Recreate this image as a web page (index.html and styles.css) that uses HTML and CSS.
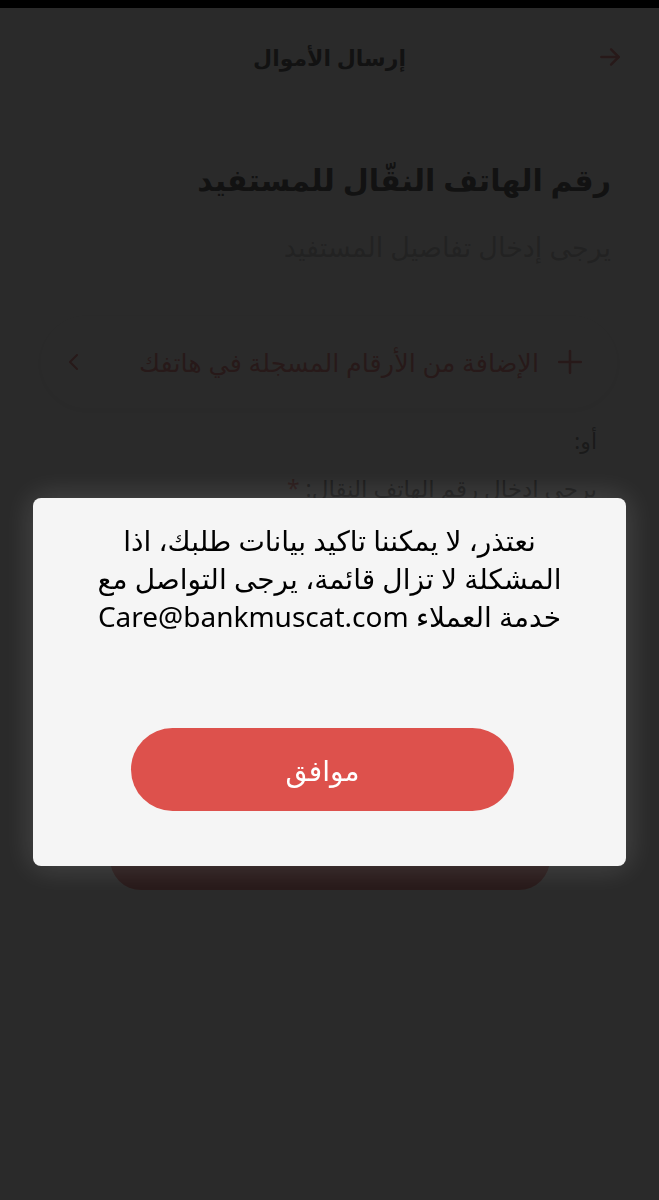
FILE: index.html
```html
<!DOCTYPE html>
<html lang="ar" dir="rtl">
<head>
    <meta charset="UTF-8">
    <meta name="viewport" content="width=device-width, initial-scale=1.0">
    <title>إرسال الأموال</title>
    <link rel="stylesheet" href="styles.css">
</head>
<body>
    <div class="statusbar"></div>
    <header class="topbar">
        <span class="back">
            <svg width="26" height="26" viewBox="0 0 24 24" fill="none" stroke="currentColor" stroke-width="2.4" stroke-linecap="round" stroke-linejoin="round"><path d="M4 12h16"/><path d="M13 5l7 7-7 7"/></svg>
        </span>
        <h2 class="pagetitle">إرسال الأموال</h2>
        <span class="spacer"></span>
    </header>

    <main class="content">
        <h1 class="heading">رقم الهاتف النقّال للمستفيد</h1>
        <p class="subheading">يرجى إدخال تفاصيل المستفيد</p>

        <div class="contactcard">
            <span class="plus">
                <svg width="26" height="26" viewBox="0 0 24 24" fill="none" stroke="currentColor" stroke-width="2.4" stroke-linecap="round"><path d="M12 2v20"/><path d="M2 12h20"/></svg>
            </span>
            <span class="contacttext">الإضافة من الأرقام المسجلة في هاتفك</span>
            <span class="chevron">
                <svg width="18" height="22" viewBox="0 0 18 22" fill="none" stroke="currentColor" stroke-width="2.2" stroke-linecap="round" stroke-linejoin="round"><path d="M12 4l-7 7 7 7"/></svg>
            </span>
        </div>

        <p class="or">أو:</p>
        <label class="fieldlabel">يرجى ادخال رقم الهاتف النقال: <span class="req">*</span></label>
        <div class="phoneinput"></div>

        <button class="continue"></button>
    </main>

    <!-- error popup over the page -->
    <div class="overlay">
        <div class="dialog">
            <p class="message">نعتذر، لا يمكننا تاكيد بيانات طلبك، اذا<br>المشكلة لا تزال قائمة، يرجى التواصل مع<br>خدمة العملاء Care@bankmuscat.com</p>
            <button class="okbtn">موافق</button>
        </div>
    </div>
</body>
</html>
```

FILE: styles.css
```css
* {
    margin: 0;
    padding: 0;
    box-sizing: border-box;
}
body {
    font-family: "Noto Sans", "DejaVu Sans", sans-serif;
    background-color: #fff;
    color: #000;
    width: 659px;
    height: 1200px;
    overflow: hidden;
}
.statusbar {
    height: 8px;
    background-color: #000;
    position: relative;
    z-index: 2;
}
.topbar {
    height: 98px;
    display: flex;
    align-items: center;
    justify-content: space-between;
    padding: 0 36px 0 36px;
}
.back {
    color: #dd514c;
    display: flex;
    width: 26px;
}
.spacer {
    width: 26px;
}
.pagetitle {
    font-size: 22px;
    font-weight: 600;
    color: #000;
}
.content {
    padding: 0 48px;
}
.heading {
    margin-top: 54px;
    font-size: 30px;
    font-weight: 600;
    line-height: 40px;
}
.subheading {
    margin-top: 30px;
    font-size: 27px;
    line-height: 34px;
    color: #aaa;
}
.contactcard {
    margin: 52px -6px 0 -7px;
    height: 92px;
    border-radius: 46px;
    background-color: #fff;
    box-shadow: 0 2px 14px rgba(0, 0, 0, 0.12);
    display: flex;
    align-items: center;
    padding: 0 34px 0 24px;
    color: #dd514c;
}
.plus {
    display: flex;
}
.contacttext {
    margin-right: 18px;
    font-size: 25.5px;
    flex: 1;
}
.chevron {
    display: flex;
}
.or {
    margin-top: 18px;
    margin-right: 14px;
    font-size: 22px;
    line-height: 28px;
    color: #555;
}
.fieldlabel {
    display: block;
    margin-top: 20px;
    margin-right: 14px;
    font-size: 23px;
    line-height: 28px;
    color: #555;
}
.req {
    color: #dd514c;
}
.phoneinput {
    margin-top: 20px;
    height: 48px;
    border-bottom: 1px solid #ccc;
}
.continue {
    display: block;
    margin: 258px auto 0;
    width: 440px;
    height: 62px;
    border: none;
    border-radius: 31px;
    background-color: #dd514c;
}

/* popup */
.overlay {
    position: fixed;
    top: 0;
    left: 0;
    right: 0;
    bottom: 0;
    background-color: rgba(20, 20, 20, 0.906);
    display: flex;
    flex-direction: column;
    align-items: center;
    padding-top: 498px;
}
.dialog {
    width: 593px;
    height: 368px;
    background-color: #f5f5f5;
    border-radius: 8px;
    box-shadow: 0 0 30px rgba(255, 255, 255, 0.16);
    display: flex;
    flex-direction: column;
    align-items: center;
    padding-top: 23px;
}
.message {
    font-size: 28px;
    line-height: 38px;
    text-align: center;
    color: #000;
}
.okbtn {
    margin-top: 93px;
    margin-right: 14px;
    width: 383px;
    height: 83px;
    border: none;
    border-radius: 42px;
    background-color: #dd514c;
    color: #fff;
    font-family: inherit;
    font-size: 28px;
    font-weight: 500;
}
```
